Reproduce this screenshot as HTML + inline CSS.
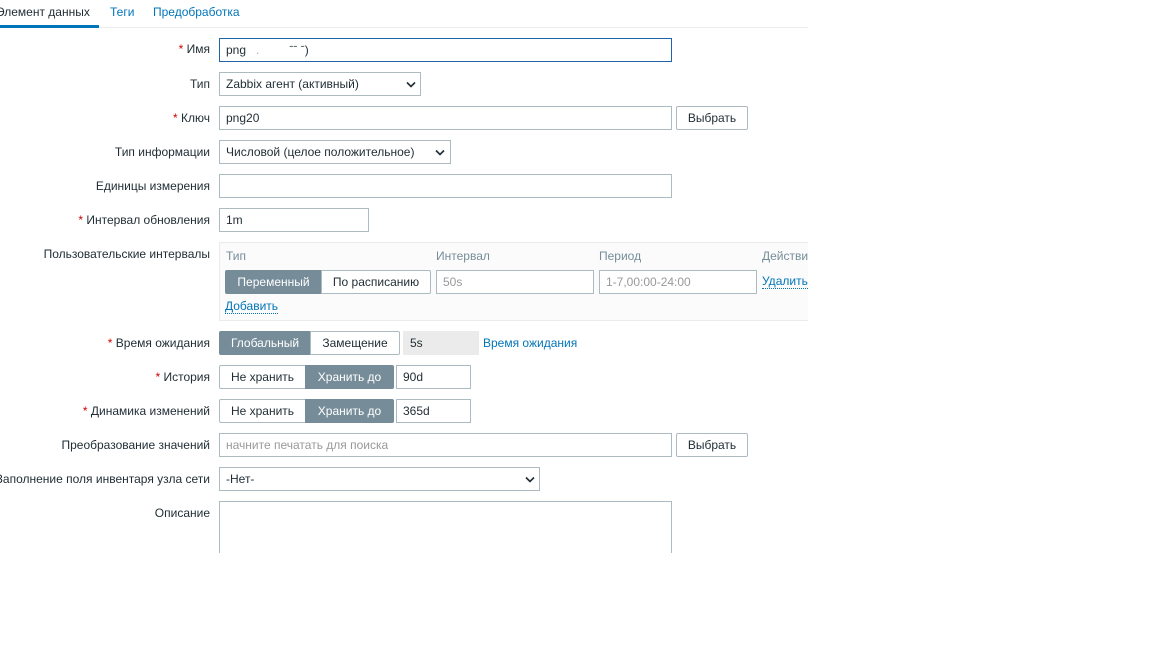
<!DOCTYPE html>
<html><head><meta charset="utf-8">
<style>
*{box-sizing:border-box;margin:0;padding:0}
body{width:1152px;height:648px;background:#fff;position:relative;overflow:hidden;font-family:"Liberation Sans",Arial,sans-serif;font-size:12px;color:#1f2c33}
.a{position:absolute}
.lbl{position:absolute;right:942px;white-space:nowrap;line-height:14px}
.req{color:#d40000}
.in{position:absolute;border:1px solid #acbbc2;background:#fff;height:24px;line-height:22px;padding-left:6px;white-space:nowrap;overflow:hidden}
.btn{position:absolute;border:1px solid #acbbc2;background:#fff;border-radius:2px;height:24px;line-height:22px;text-align:center}
.seg{position:absolute;height:24px;line-height:22px;text-align:center;border:1px solid #acbbc2;background:#fff}
.on{background:#768d99;color:#fff;border-color:#768d99}
.link{color:#0275b8}
.dot{border-bottom:1px dotted #0275b8}
.chev{position:absolute;top:8px;width:10px;height:7px}
</style></head><body>
<div class="a" style="left:-4px;top:5px;color:#1f2c33">Элемент данных</div>
<div class="a link" style="left:110px;top:5px">Теги</div>
<div class="a link" style="left:153px;top:5px">Предобработка</div>
<div class="a" style="left:0;top:27px;width:808px;height:1px;background:#ebebeb"></div>
<div class="a" style="left:0;top:25px;width:99px;height:3px;background:#0275b8"></div>

<div class="lbl" style="top:42px"><span class="req">*</span> Имя</div>
<div class="in" style="left:219px;top:38px;width:453px;border-color:#1f65a6">png &nbsp; <span style="color:#aaa">.</span> &nbsp; &nbsp; &nbsp; &nbsp; ˉˉ ˉ)</div>

<div class="lbl" style="top:77px">Тип</div>
<div class="in" style="left:219px;top:72px;width:202px">Zabbix агент (активный)<svg class="chev" style="left:186px" viewBox="0 0 10 7"><path d="M1 1.5l4 4 4-4" stroke="#1f2c33" stroke-width="1.6" fill="none"/></svg></div>

<div class="lbl" style="top:111px"><span class="req">*</span> Ключ</div>
<div class="in" style="left:219px;top:106px;width:453px">png20</div>
<div class="btn" style="left:676px;top:106px;width:72px">Выбрать</div>

<div class="lbl" style="top:145px">Тип информации</div>
<div class="in" style="left:219px;top:140px;width:232px">Числовой (целое положительное)<svg class="chev" style="left:215px" viewBox="0 0 10 7"><path d="M1 1.5l4 4 4-4" stroke="#1f2c33" stroke-width="1.6" fill="none"/></svg></div>

<div class="lbl" style="top:179px">Единицы измерения</div>
<div class="in" style="left:219px;top:174px;width:453px"></div>

<div class="lbl" style="top:213px"><span class="req">*</span> Интервал обновления</div>
<div class="in" style="left:219px;top:208px;width:150px">1m</div>

<div class="lbl" style="top:247px">Пользовательские интервалы</div>
<div class="a" style="left:219px;top:242px;width:600px;height:79px;border:1px solid #ebebeb;background:#fbfbfb"></div>
<div class="a" style="left:226px;top:249px;color:#768d99">Тип</div>
<div class="a" style="left:436px;top:249px;color:#768d99">Интервал</div>
<div class="a" style="left:599px;top:249px;color:#768d99">Период</div>
<div class="a" style="left:762px;top:249px;color:#768d99">Действия</div>
<div class="seg on" style="left:225px;top:270px;width:97px;border-radius:2px 0 0 2px">Переменный</div>
<div class="seg" style="left:321px;top:270px;width:110px;border-radius:0 2px 2px 0">По расписанию</div>
<div class="in" style="left:436px;top:270px;width:158px;color:#999">50s</div>
<div class="in" style="left:599px;top:270px;width:158px;color:#999">1-7,00:00-24:00</div>
<div class="a link dot" style="left:762px;top:275px;line-height:13px">Удалить</div>
<div class="a link dot" style="left:225px;top:300px;line-height:13px">Добавить</div>
<div class="a" style="left:808px;top:240px;width:344px;height:90px;background:#fff"></div>

<div class="lbl" style="top:336px"><span class="req">*</span> Время ожидания</div>
<div class="seg on" style="left:219px;top:331px;width:92px;border-radius:2px 0 0 2px">Глобальный</div>
<div class="seg" style="left:310px;top:331px;width:90px;border-radius:0 2px 2px 0">Замещение</div>
<div class="in" style="left:403px;top:331px;width:76px;background:#ebebeb;border-color:#ebebeb">5s</div>
<div class="a link" style="left:483px;top:336px">Время ожидания</div>

<div class="lbl" style="top:370px"><span class="req">*</span> История</div>
<div class="seg" style="left:219px;top:365px;width:87px;border-radius:2px 0 0 2px">Не хранить</div>
<div class="seg on" style="left:305px;top:365px;width:89px;border-radius:0 2px 2px 0">Хранить до</div>
<div class="in" style="left:396px;top:365px;width:75px">90d</div>

<div class="lbl" style="top:404px"><span class="req">*</span> Динамика изменений</div>
<div class="seg" style="left:219px;top:399px;width:87px;border-radius:2px 0 0 2px">Не хранить</div>
<div class="seg on" style="left:305px;top:399px;width:89px;border-radius:0 2px 2px 0">Хранить до</div>
<div class="in" style="left:396px;top:399px;width:75px">365d</div>

<div class="lbl" style="top:438px">Преобразование значений</div>
<div class="in" style="left:219px;top:433px;width:453px;color:#999">начните печатать для поиска</div>
<div class="btn" style="left:676px;top:433px;width:72px">Выбрать</div>

<div class="lbl" style="top:472px">Заполнение поля инвентаря узла сети</div>
<div class="in" style="left:219px;top:467px;width:321px">-Нет-<svg class="chev" style="left:305px" viewBox="0 0 10 7"><path d="M1 1.5l4 4 4-4" stroke="#1f2c33" stroke-width="1.6" fill="none"/></svg></div>

<div class="lbl" style="top:506px">Описание</div>
<div class="a" style="left:219px;top:501px;width:453px;height:60px;border:1px solid #acbbc2"></div>
<div class="a" style="left:0;top:553px;width:1152px;height:95px;background:#fff"></div>
</body></html>
